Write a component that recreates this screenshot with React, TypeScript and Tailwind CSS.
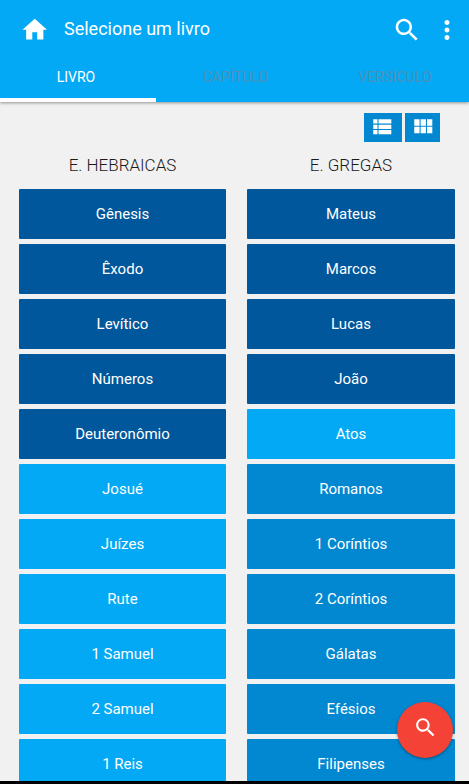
import clsx from "clsx";

type Tone = "dark" | "light" | "medium";

interface Book {
  name: string;
  tone: Tone;
}

const tones: Record<Tone, string> = {
  dark: "bg-[#01579b]",
  light: "bg-[#03a9f4]",
  medium: "bg-[#0288d1]",
};

const hebrewBooks: Book[] = [
  { name: "Gênesis", tone: "dark" },
  { name: "Êxodo", tone: "dark" },
  { name: "Levítico", tone: "dark" },
  { name: "Números", tone: "dark" },
  { name: "Deuteronômio", tone: "dark" },
  { name: "Josué", tone: "light" },
  { name: "Juízes", tone: "light" },
  { name: "Rute", tone: "light" },
  { name: "1 Samuel", tone: "light" },
  { name: "2 Samuel", tone: "light" },
  { name: "1 Reis", tone: "light" },
];

const greekBooks: Book[] = [
  { name: "Mateus", tone: "dark" },
  { name: "Marcos", tone: "dark" },
  { name: "Lucas", tone: "dark" },
  { name: "João", tone: "dark" },
  { name: "Atos", tone: "light" },
  { name: "Romanos", tone: "medium" },
  { name: "1 Coríntios", tone: "medium" },
  { name: "2 Coríntios", tone: "medium" },
  { name: "Gálatas", tone: "medium" },
  { name: "Efésios", tone: "medium" },
  { name: "Filipenses", tone: "medium" },
];

const icons = {
  home: "M10 20v-6h4v6h5v-8h3L12 3 2 12h3v8z",
  search:
    "M15.5 14h-.79l-.28-.27C15.41 12.59 16 11.11 16 9.5 16 5.91 13.09 3 9.5 3S3 5.91 3 9.5 5.91 16 9.5 16c1.61 0 3.09-.59 4.23-1.57l.27.28v.79l5 4.99L20.49 19l-4.99-5zm-6 0C7.01 14 5 11.99 5 9.5S7.01 5 9.5 5 14 7.01 14 9.5 11.99 14 9.5 14z",
  more: "M12 8c1.1 0 2-.9 2-2s-.9-2-2-2-2 .9-2 2 .9 2 2 2zm0 2c-1.1 0-2 .9-2 2s.9 2 2 2 2-.9 2-2-.9-2-2-2zm0 6c-1.1 0-2 .9-2 2s.9 2 2 2 2-.9 2-2-.9-2-2-2z",
  list: "M4 14h4v-4H4v4zm0 5h4v-4H4v4zM4 9h4V5H4v4zm5 5h12v-4H9v4zm0 5h12v-4H9v4zM9 5v4h12V5H9z",
  grid: "M4 11h5V5H4v6zm0 7h5v-6H4v6zm6 0h5v-6h-5v6zm6 0h5v-6h-5v6zm-6-7h5V5h-5v6zm6-6v6h5V5h-5z",
};

function Icon({ name, className }: { name: keyof typeof icons; className?: string }) {
  return (
    <svg viewBox="0 0 24 24" fill="currentColor" className={clsx("shrink-0", className)}>
      <path d={icons[name]} />
    </svg>
  );
}

function BookColumn({ title, books, className }: { title: string; books: Book[]; className: string }) {
  return (
    <section className={className}>
      <h2 className="h-[47px] pt-[11px] text-center text-[17px] leading-6 font-light text-[#1a1a1a]">{title}</h2>
      <div className="flex flex-col gap-[5px]">
        {books.map((book) => (
          <button
            key={book.name}
            className={clsx("h-[50px] w-full rounded-[1px] text-[15px] text-white", tones[book.tone])}
          >
            {book.name}
          </button>
        ))}
      </div>
    </section>
  );
}

export default function App() {
  return (
    <div className="relative flex h-[784px] w-[469px] flex-col overflow-hidden bg-[#f1f1f1] font-['Roboto',sans-serif]">
      {/* App bar */}
      <header className="relative h-[102px] shrink-0 bg-[#03a9f4] text-white shadow-[0_1px_3px_rgba(0,0,0,0.4)]">
        <div className="flex h-[60px] items-center pr-[7px] pl-5">
          <Icon name="home" className="-mt-px size-[29.5px]" />
          <h1 className="ml-[14.5px] flex-1 pb-[3px] text-[18px] leading-6">Selecione um livro</h1>
          <Icon name="search" className="size-[30px]" />
          <Icon name="more" className="ml-[10px] size-[30px]" />
        </div>
        {/* Tabs */}
        <nav className="-ml-1 flex h-[38px] w-[480px] text-[14.2px] leading-5 text-[#4d90b7]">
          <button className="w-40 pb-1 text-sm text-white">LIVRO</button>
          <button className="w-40 pr-px pb-1">CAPÍTULO</button>
          <button className="w-40 pr-[2px] pb-1">VERSÍCULO</button>
        </nav>
        <div className="h-1 w-[156px] bg-white" />
      </header>

      <main className="min-h-0 flex-1 overflow-hidden">
        {/* View mode */}
        <div className="flex justify-end gap-[3px] pt-[11px] pr-[29px] text-white">
          <button className="flex h-[29px] w-[38px] justify-start bg-[#0288d1] pt-[0.5px] pl-[4.8px]">
            <Icon name="list" className="size-[25.5px]" />
          </button>
          <button className="flex h-[29px] w-[35px] justify-start bg-[#0288d1] pt-[0.7px] pl-[4.8px]">
            <Icon name="grid" className="size-[25.5px]" />
          </button>
        </div>
        <div className="flex justify-between pr-[14px] pl-[19px]">
          <BookColumn title="E. HEBRAICAS" books={hebrewBooks} className="w-[207px]" />
          <BookColumn title="E. GREGAS" books={greekBooks} className="w-[208px]" />
        </div>
      </main>

      <div className="h-[3px] shrink-0 bg-black" />

      {/* Floating search */}
      <button className="absolute right-4 bottom-[26px] flex size-14 justify-center rounded-full bg-[#f44336] pt-[13px] pl-px text-white shadow-[0_1px_3px_rgba(0,0,0,0.4)]">
        <Icon name="search" className="size-[25px]" />
      </button>
    </div>
  );
}
